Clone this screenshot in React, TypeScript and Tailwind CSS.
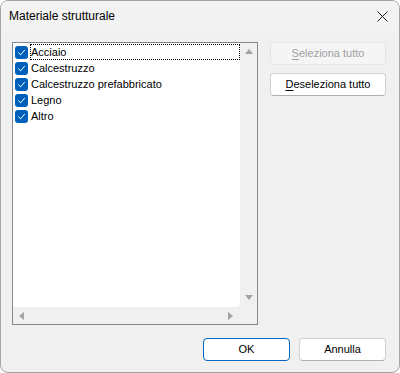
const items = ["Acciaio", "Calcestruzzo", "Calcestruzzo prefabbricato", "Legno", "Altro"];

const CheckBox = () => (
    <span className="w-[13px] h-[13px] rounded-[3px] bg-[#005fb8] flex items-center justify-center shrink-0">
        <svg width="9" height="9" viewBox="0 0 9 9" fill="none">
            <path d="M1.5 4.8 L3.6 6.8 L7.6 2.2" stroke="white" strokeWidth="1" strokeLinecap="round" strokeLinejoin="round" />
        </svg>
    </span>
);

const Arrow = ({ dir }: { dir: "up" | "down" | "left" | "right" }) => {
    const pts = {
        up: "0,6 4,1 8,6",
        down: "0,1 8,1 4,6",
        left: "6,0 6,8 1,4",
        right: "1,0 1,8 6,4",
    }[dir];
    return (
        <svg width="8" height="8" viewBox="0 0 8 8">
            <polygon points={pts} fill="#a3a3a3" />
        </svg>
    );
};

const App = () => {
    return (
        <div
            className="w-[400px] h-[373px] bg-[#f0f0f0] border border-[#a6a6a6] rounded-[8px] overflow-hidden flex flex-col text-[11px] text-black"
            style={{ fontFamily: '"Liberation Sans", Arial, sans-serif' }}
        >
            {/* title bar */}
            <div className="h-[30px] bg-[#f3f3f3] flex items-center justify-between pl-[8px] pr-[11px] shrink-0">
                <span className="text-[12px]">Materiale strutturale</span>
                <svg width="11" height="11" viewBox="0 0 11 11">
                    <path d="M0.5 0.5 L10.5 10.5 M10.5 0.5 L0.5 10.5" stroke="#1a1a1a" strokeWidth="1" />
                </svg>
            </div>

            <div className="flex-1 flex flex-col pl-[11px] pr-[13px] pt-[11px]">
                <div className="flex gap-[12px]">
                    {/* list box */}
                    <div className="w-[246px] h-[283px] border border-[#828790] bg-[#f0f0f0] grid grid-cols-[1fr_17px] grid-rows-[1fr_17px]">
                        <div className="bg-white rounded-br-[4px] pt-[1px] pl-[2px]">
                            {items.map((item, i) => (
                                <div key={item} className="h-[16px] flex items-center gap-[2px]">
                                    <CheckBox />
                                    <span
                                        className={
                                            "flex-1 h-[16px] leading-[16px] pl-[1px] " +
                                            (i === 0 ? "outline outline-1 outline-dotted outline-black -outline-offset-1" : "")
                                        }
                                    >
                                        {item}
                                    </span>
                                </div>
                            ))}
                        </div>
                        <div className="flex flex-col items-center justify-between py-[5px]">
                            <Arrow dir="up" />
                            <Arrow dir="down" />
                        </div>
                        <div className="flex items-center justify-between px-[5px]">
                            <Arrow dir="left" />
                            <Arrow dir="right" />
                        </div>
                        <div />
                    </div>

                    {/* side buttons */}
                    <div className="flex flex-col gap-[8px]">
                        <button
                            type="button"
                            className="w-[116px] h-[23px] rounded-[4px] bg-[#f5f5f5] border border-[#e5e5e5] text-[#a0a0a0] text-[11px]"
                        >
                            <span className="underline underline-offset-2">S</span>eleziona tutto
                        </button>
                        <button
                            type="button"
                            className="w-[116px] h-[23px] rounded-[4px] bg-white border border-[#d0d0d0] border-b-[#b0b0b0] text-black text-[11px]"
                        >
                            <span className="underline underline-offset-2">D</span>eseleziona tutto
                        </button>
                    </div>
                </div>

                {/* footer */}
                <div className="mt-[13px] flex justify-end gap-[9px]">
                    <button
                        type="button"
                        className="w-[87px] h-[23px] rounded-[4px] bg-white border-[1.5px] border-[#0067c0] text-black text-[11px]"
                    >
                        OK
                    </button>
                    <button
                        type="button"
                        className="w-[87px] h-[23px] rounded-[4px] bg-white border border-[#d0d0d0] border-b-[#b0b0b0] text-black text-[11px]"
                    >
                        Annulla
                    </button>
                </div>
            </div>
        </div>
    );
};

export default App;
